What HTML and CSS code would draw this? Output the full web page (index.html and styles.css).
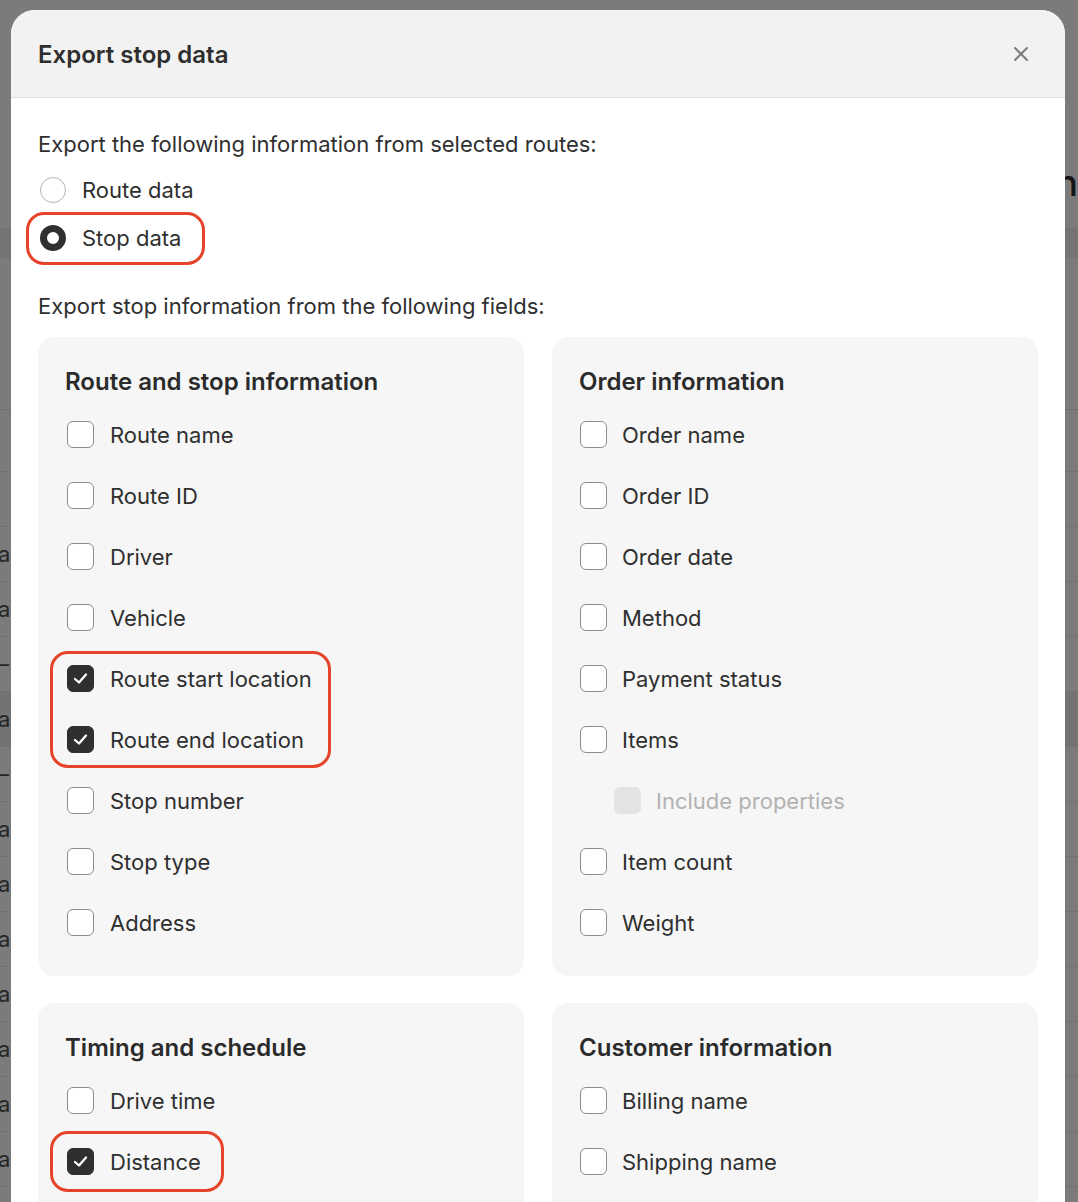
FILE: index.html
```html
<!DOCTYPE html>
<html lang="en">
<head>
<meta charset="utf-8">
<title>Export stop data</title>
<link rel="stylesheet" href="styles.css">
</head>
<body>
<div class="page">
  <div class="page-top"><span class="page-title">Plan</span></div>
  <div class="page-band"></div>
  <div class="page-head"></div>
  <div class="page-row tall"></div>
  <div class="page-row"></div>
  <div class="page-row"><span class="cell">ar</span></div>
  <div class="page-row"><span class="cell">ar</span></div>
  <div class="page-row"><span class="cell">–</span></div>
  <div class="page-row hover"><span class="cell">ar</span></div>
  <div class="page-row"><span class="cell">–</span></div>
  <div class="page-row"><span class="cell">ar</span></div>
  <div class="page-row"><span class="cell">ar</span></div>
  <div class="page-row"><span class="cell">ar</span></div>
  <div class="page-row"><span class="cell">ar</span></div>
  <div class="page-row"><span class="cell">ar</span></div>
  <div class="page-row"><span class="cell">ar</span></div>
  <div class="page-row"><span class="cell">ar</span></div>
</div>

<div class="modal">
  <div class="modal-header">
    <h2 class="modal-title">Export stop data</h2>
    <button class="close" type="button" aria-label="Close">
      <svg width="16" height="16" viewBox="0 0 16 16"><path d="M2 2 L14 14 M14 2 L2 14" stroke="#7c7c7c" stroke-width="2" stroke-linecap="round" fill="none"/></svg>
    </button>
  </div>
  <div class="modal-body">
    <p class="intro">Export the following information from selected routes:</p>
    <div class="radio-list">
      <div class="radio-row"><span class="radio"></span><span>Route data</span></div>
      <div class="radio-row mark mark-radio"><span class="radio on"></span><span>Stop data</span></div>
    </div>
    <p class="fields-label">Export stop information from the following fields:</p>

    <div class="grid">
      <section class="card">
        <h3>Route and stop information</h3>
        <div class="item"><span class="box"></span><span>Route name</span></div>
        <div class="item"><span class="box"></span><span>Route ID</span></div>
        <div class="item"><span class="box"></span><span>Driver</span></div>
        <div class="item"><span class="box"></span><span>Vehicle</span></div>
        <div class="mark mark-pair">
          <div class="item"><span class="box checked"><svg width="17" height="17" viewBox="0 0 17 17"><path d="M3 9 L7 12.5 L14 4.5" stroke="#fff" stroke-width="2.3" stroke-linecap="round" stroke-linejoin="round" fill="none"/></svg></span><span>Route start location</span></div>
          <div class="item"><span class="box checked"><svg width="17" height="17" viewBox="0 0 17 17"><path d="M3 9 L7 12.5 L14 4.5" stroke="#fff" stroke-width="2.3" stroke-linecap="round" stroke-linejoin="round" fill="none"/></svg></span><span>Route end location</span></div>
        </div>
        <div class="item"><span class="box"></span><span>Stop number</span></div>
        <div class="item"><span class="box"></span><span>Stop type</span></div>
        <div class="item"><span class="box"></span><span>Address</span></div>
      </section>

      <section class="card card-right">
        <h3>Order information</h3>
        <div class="item"><span class="box"></span><span>Order name</span></div>
        <div class="item"><span class="box"></span><span>Order ID</span></div>
        <div class="item"><span class="box"></span><span>Order date</span></div>
        <div class="item"><span class="box"></span><span>Method</span></div>
        <div class="item"><span class="box"></span><span>Payment status</span></div>
        <div class="item"><span class="box"></span><span>Items</span></div>
        <div class="item sub"><span class="box disabled"></span><span>Include properties</span></div>
        <div class="item"><span class="box"></span><span>Item count</span></div>
        <div class="item"><span class="box"></span><span>Weight</span></div>
      </section>

      <section class="card">
        <h3>Timing and schedule</h3>
        <div class="item"><span class="box"></span><span>Drive time</span></div>
        <div class="item mark mark-single"><span class="box checked"><svg width="17" height="17" viewBox="0 0 17 17"><path d="M3 9 L7 12.5 L14 4.5" stroke="#fff" stroke-width="2.3" stroke-linecap="round" stroke-linejoin="round" fill="none"/></svg></span><span>Distance</span></div>
      </section>

      <section class="card card-right">
        <h3>Customer information</h3>
        <div class="item"><span class="box"></span><span>Billing name</span></div>
        <div class="item"><span class="box"></span><span>Shipping name</span></div>
      </section>
    </div>
  </div>
</div>
</body>
</html>
```

FILE: styles.css
```css
html, body {
  margin: 0;
  padding: 0;
}

body {
  background: #7b7b7b;
  font-family: Inter, "Noto Sans", "Liberation Sans", sans-serif;
  color: #2f2f2f;
  height: 1202px;
  overflow: hidden;
  position: relative;
}

.page {
  padding-top: 160px;
}

.page-top {
  display: flex;
  justify-content: flex-end;
  margin-right: 0;
  height: 46px;
}

.page-title {
  font-size: 36px;
  line-height: 46px;
  font-weight: 500;
  color: #141414;
}

.page-band {
  margin-top: 22px;
  height: 30px;
  background: #747474;
}

.page-head {
  height: 151px;
  border-bottom: 1px solid #6f6f6f;
}

.page-row {
  height: 54px;
  border-bottom: 1px solid #727272;
  display: flex;
  align-items: center;
}

.page-row.tall {
  height: 61px;
}

.page-row.hover {
  background: #737373;
}

.cell {
  margin-left: -2px;
  font-size: 22px;
  color: #262626;
}

/* modal */
.modal {
  position: absolute;
  left: 11px;
  top: 10px;
  width: 1054px;
  height: 1260px;
  background: #ffffff;
  border-radius: 24px 24px 0 0;
  overflow: hidden;
}

.modal-header {
  height: 88px;
  box-sizing: border-box;
  background: #f2f2f2;
  border-bottom: 1px solid #e0e0e0;
  display: flex;
  align-items: center;
  justify-content: space-between;
  padding: 2px 27px 0;
}

.modal-title {
  margin: 0;
  font-size: 24px;
  line-height: 30px;
  font-weight: 600;
  color: #2e2e2e;
}

.close {
  width: 34px;
  height: 34px;
  margin-top: -2px;
  border: 0;
  background: transparent;
  padding: 0;
  display: grid;
  place-items: center;
}

.modal-body {
  padding: 32px 27px 0;
}

.intro,
.fields-label {
  margin: 0;
  font-size: 22px;
  line-height: 28px;
  color: #2f2f2f;
}

.intro {
  margin-bottom: 8px;
}

.fields-label {
  margin-top: 30px;
  margin-bottom: 17px;
}

.radio-list {
  display: flex;
  flex-direction: column;
  align-items: flex-start;
}

.radio-row {
  display: inline-flex;
  align-items: center;
  gap: 16px;
  height: 48px;
  font-size: 22px;
  line-height: 28px;
}

.radio {
  width: 26px;
  height: 26px;
  box-sizing: border-box;
  border-radius: 50%;
  border: 1.5px solid #b3b3b3;
  background: #ffffff;
  margin-left: 2px;
  flex: none;
}

.radio.on {
  border: 7px solid #303030;
}

/* annotation outlines */
.mark {
  position: relative;
  width: fit-content;
}

.mark::after {
  content: "";
  position: absolute;
  border: 3px solid #e5442a;
  border-radius: 18px;
  pointer-events: none;
}

.mark-radio::after {
  top: -2px;
  bottom: -3px;
  left: -12px;
  right: -24px;
}

.mark-pair::after {
  top: 3px;
  bottom: 2px;
  left: -15px;
  right: -19px;
}

.mark-single::after {
  top: 0;
  bottom: 0;
  left: -15px;
  right: -23px;
}

/* field cards */
.grid {
  display: grid;
  grid-template-columns: 1fr 1fr;
  column-gap: 28px;
  row-gap: 27px;
}

.card {
  background: #f6f6f6;
  border-radius: 16px;
  padding: 31px 27px 23px;
}

.card h3 {
  margin: 0 0 8px;
  font-size: 24px;
  line-height: 28px;
  font-weight: 600;
  color: #2b2b2b;
}

.card-right .box {
  margin-left: 1px;
}

.card-right .item {
  gap: 15px;
}

.item {
  display: flex;
  align-items: center;
  gap: 16px;
  height: 61px;
  font-size: 22px;
  line-height: 28px;
  color: #2f2f2f;
}

.item.sub {
  padding-left: 34px;
  color: #b2b2b2;
}

.box {
  width: 27px;
  height: 27px;
  box-sizing: border-box;
  border: 1.5px solid #8c8c8c;
  border-radius: 6px;
  background: #ffffff;
  margin-left: 2px;
  flex: none;
}

.box.checked {
  background: #2f2f2f;
  border-color: #2f2f2f;
  display: grid;
  place-items: center;
}

.box.disabled {
  background: #e3e3e3;
  border-color: #e3e3e3;
}
```
